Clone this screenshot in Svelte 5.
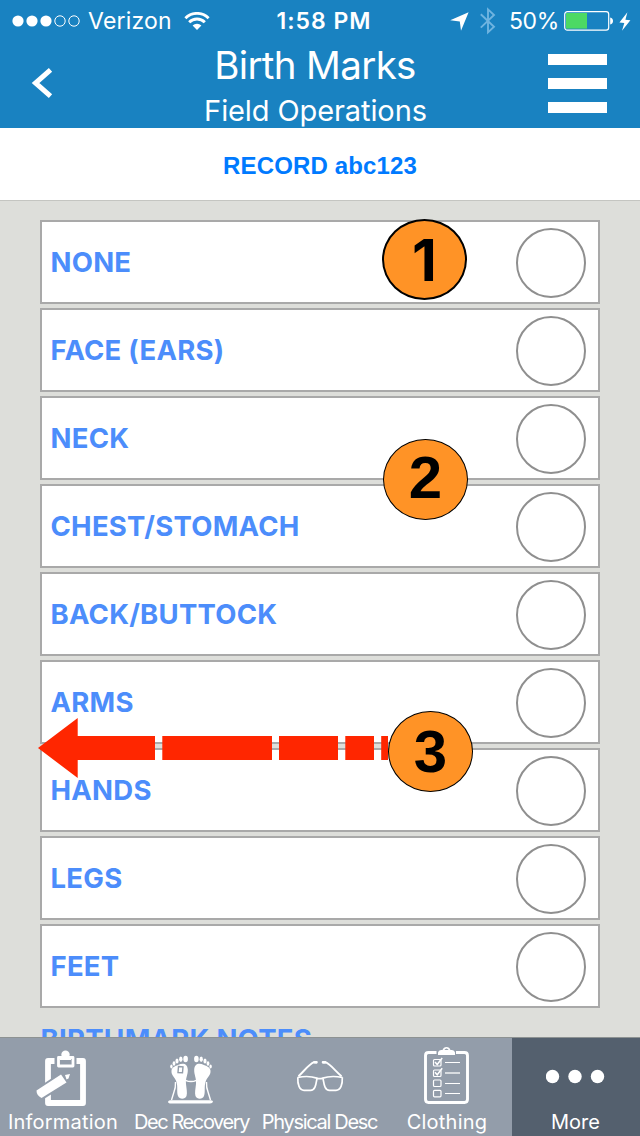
<script>
  const rows = [
    'NONE',
    'FACE (EARS)',
    'NECK',
    'CHEST/STOMACH',
    'BACK/BUTTOCK',
    'ARMS',
    'HANDS',
    'LEGS',
    'FEET'
  ];
  const markers = [
    { n: 1, x: 382, y: 219 },
    { n: 2, x: 383, y: 439 },
    { n: 3, x: 388, y: 711 }
  ];
</script>

<div class="screen">
  <header>
    <div class="status">
      <div class="side left">
        <svg class="dots" width="68" height="14" viewBox="0 0 68 14">
          <g fill="#fff"><circle cx="6" cy="7" r="5.6" /><circle cx="20" cy="7" r="5.6" /><circle cx="34" cy="7" r="5.6" /></g>
          <g fill="none" stroke="#fff"><circle cx="48" cy="7" r="5.2" /><circle cx="62" cy="7" r="5.2" /></g>
        </svg>
        <span class="carrier">Verizon</span>
        <svg class="wifi" width="26" height="18" viewBox="0 0 26 18" fill="none" stroke="#fff" stroke-width="2.9">
          <path d="M1.400 6.200a16.400 16.400 0 0 1 23.200 0" />
          <path d="M5.200 10.200a11 11 0 0 1 15.600 0" />
          <path d="M13 18l-4.400-4.400a6.200 6.200 0 0 1 8.800 0z" fill="#fff" stroke="none" />
        </svg>
      </div>
      <div class="clock">1:58 PM</div>
      <div class="side right">
        <svg class="location" width="19" height="19" viewBox="0 0 19 19"><path d="M18.600.2L11 18.800 9.800 9.400.2 8.200z" fill="#fff" /></svg>
        <svg class="bluetooth" width="16" height="28" viewBox="0 0 16 28" fill="none" stroke="#6fb4e0" stroke-width="1.9"><path d="M.8 7.200l13.200 12.600L8 25.400V2.400l6 5.600L.8 20.600" /></svg>
        <span class="percent">50%</span>
        <svg class="battery" width="50" height="20" viewBox="0 0 50 20">
          <rect x=".7" y=".7" width="44" height="18.4" rx="2.6" fill="none" stroke="#fff" stroke-width="1.2" />
          <rect x="2" y="2" width="21" height="15.6" fill="#4cd964" />
          <path d="M46.200 6.600q2.800.6 2.800 3.400t-2.800 3.400z" fill="#fff" />
        </svg>
        <svg class="bolt" width="12" height="19" viewBox="0 0 12 19"><path d="M8.400.2L.4 10.400l4.900.5L3 18.800l8.400-10.500-5-.5z" fill="#fff" /></svg>
      </div>
    </div>
    <nav>
      <button class="back" aria-label="Back">
        <svg width="22" height="32" viewBox="0 0 22 32"><path d="M19.500 2.800L4.500 16l15 13.200" fill="none" stroke="#fff" stroke-width="5" /></svg>
      </button>
      <div class="titles">
        <h1>Birth Marks</h1>
        <h2>Field Operations</h2>
      </div>
      <button class="menu" aria-label="Menu"><i></i><i></i><i></i></button>
    </nav>
  </header>

  <div class="record">RECORD abc123</div>

  <main>
    {#each rows as label}
      <div class="row"><span>{label}</span><i class="radio"></i></div>
    {/each}
    <div class="notes">BIRTHMARK NOTES</div>
  </main>

  <footer>
    <div class="tab">
      <svg width="56" height="62" viewBox="36 1046 56 62">
        <path d="M54.500 1061H48v42h35v-42h-6.500" fill="none" stroke="#fff" stroke-width="5.800" stroke-linejoin="round" />
        <path d="M58.500 1057.500h14.500v8.500h-14.500z" fill="none" stroke="#fff" stroke-width="2.800" stroke-linejoin="round" />
        <circle cx="65.500" cy="1054.700" r="4.200" fill="#fff" /><path d="M60 1056h11v4H60z" fill="#fff" />
        <path d="M41.500 1098q-4.500-3-4.500-7.500l24-16 5.500 8z" fill="#fff" stroke="#939daa" stroke-width="4" />
        <path d="M41.500 1098q-5-2.500-5-7.500l24.500-16 5.500 8z" fill="#fff" />
        <path d="M65 1075l5-1-1.500 4.500-2 1z" fill="#fff" />
      </svg>
      <span class="t0">Information</span>
    </div>
    <div class="tab">
      <svg width="56" height="62" viewBox="164 1046 56 62">
        <path d="M170 1100.300h41q2 0 2 1.500-.5 1.800-3 1.800h-39q-3 0-3-1.800.5-1.500 2-1.500z" fill="#fff" />
        <path d="M175.500 1082q.3 6-1.700 10.500l-2.300 7.500M206.500 1082q-.3 6 1.700 10.500l2.300 7.500M185.500 1080.300q5.500 2.500 11 0" fill="none" stroke="#fff" stroke-width="1.400" />
        <g fill="#fff">
          <path d="M178 1065c5-2.500 9.500-1.500 9.800 4.500.2 5.500-2.300 8-1.800 14.500.5 5 1.500 9 .5 12-1.500 3.500-7 3.500-8.500 0-1.500-3.500 0-9-1.500-14s-5.500-6.500-5-11.500c.3-3 3.500-4.500 6.500-5.500z" />
          <path d="M204 1065c-5-2.500-9.500-1.500-9.800 4.500-.2 5.500 2.300 8 1.800 14.500-.5 5-1.500 9-.5 12 1.500 3.500 7 3.500 8.500 0 1.500-3.500 0-9 1.500-14s5.500-6.500 5-11.500c-.3-3-3.500-4.500-6.500-5.500z" />
          <ellipse cx="185.600" cy="1059" rx="2.300" ry="3.300" /><ellipse cx="180.800" cy="1059.300" rx="1.700" ry="2.800" /><ellipse cx="177" cy="1061" rx="1.600" ry="2.500" /><ellipse cx="174" cy="1063.500" rx="1.400" ry="2.200" /><ellipse cx="171.400" cy="1066.500" rx="1.200" ry="2" />
          <ellipse cx="196.400" cy="1059" rx="2.300" ry="3.300" /><ellipse cx="201.200" cy="1059.300" rx="1.700" ry="2.800" /><ellipse cx="205" cy="1061" rx="1.600" ry="2.500" /><ellipse cx="208" cy="1063.500" rx="1.400" ry="2.200" /><ellipse cx="210.600" cy="1066.500" rx="1.200" ry="2" />
        </g>
        <path d="M178.500 1066.500l4.500.3-.5 6-4.500-.3z" fill="none" stroke="#939daa" stroke-width="1.400" />
      </svg>
      <span class="t1">Dec Recovery</span>
    </div>
    <div class="tab">
      <svg width="56" height="62" viewBox="292 1046 56 62" fill="none" stroke="#fff">
        <path d="M317 1062.500l-3-.3c-5 2-10 9-15.500 14M322.500 1062.500l3-.3c5 2 10 9 16 14" stroke-width="1.900" />
        <path d="M297.800 1077.300c6-1 14-1 19 .8q3 1.200 6 0c5-1.800 13.500-1.800 19.500-.8M297.800 1077.300c-.3 7 1.500 13 6.200 13h6.500c5 0 5.500-6.500 6.500-12M342.300 1077.300c.3 7-1.500 13-6.300 13h-6.500c-5 0-5.500-6.500-6.500-12" stroke-width="1.700" />
        <path d="M314.500 1062.300h2M323 1062.300h2" stroke-width="2.600" stroke-linecap="round" />
      </svg>
      <span class="t2">Physical Desc</span>
    </div>
    <div class="tab">
      <svg width="56" height="62" viewBox="420 1046 56 62" fill="none" stroke="#fff">
        <path d="M436.500 1052.500h-8q-3 0-3 3v43.800q0 3.200 3 3.200h36q3 0 3-3.200v-43.800q0-3-3-3H456" stroke-width="2.900" />
        <path d="M438 1055v-2.500q.5-2.300 3-2.500h1.500q1-3 4-3t4 3h1.500q2.500.2 3 2.500v2.500z" fill="#fff" stroke="none" />
        <path d="M444.300 1050q2.200-3 4.400 0z" fill="#939daa" stroke="none" />
        <g stroke-width="1.200"><rect x="433.500" y="1059.500" width="7.500" height="6.500" rx="1" /><rect x="433.500" y="1070" width="7.500" height="6.500" rx="1" /><rect x="433.500" y="1080" width="7.500" height="6.500" rx="1" /><rect x="433.500" y="1090.300" width="7.500" height="6.500" rx="1" /></g>
        <path d="M435 1062l2.200 2.500 5-6.500M435 1072.200l2.200 2.500 5-6.500" stroke-width="1.500" />
        <path d="M445 1062.500h15M445 1083.500h15M445 1093.500h15" /><path d="M445 1073h15" stroke-width="1.600" stroke-opacity=".8" />
      </svg>
      <span class="t3">Clothing</span>
    </div>
    <div class="tab active">
      <svg width="60" height="62" viewBox="546 1046 60 62" fill="#fff"><circle cx="552.500" cy="1076.500" r="6.700" /><circle cx="575" cy="1076.500" r="6.700" /><circle cx="597.500" cy="1076.500" r="6.700" /></svg>
      <span class="t4">More</span>
    </div>
  </footer>

  <svg class="arrow" width="350" height="60" viewBox="38 718 350 60" fill="#ff2600">
    <path d="M38 748l39.700-30v18H155v24H77.700v18z" />
    <path d="M162.300 736H272v24H162.300zM279 736h59v24h-59zM345.300 736H374v24h-28.700zM381.200 736H388v24h-6.800z" />
  </svg>
  {#each markers as m}
    <div class="marker m{m.n}" style="left:{m.x}px;top:{m.y}px">{m.n}</div>
  {/each}
</div>

<style>
  :global(body) { margin: 0; }
  .screen {
    position: relative;
    display: flex;
    flex-direction: column;
    width: 640px;
    height: 1136px;
    overflow: hidden;
    background: #dddeda;
    font-family: Inter, "Liberation Sans", sans-serif;
  }
  header { flex: none; height: 128px; background: #1982c1; color: #fff; }
  .status { display: grid; grid-template-columns: 250px 1fr 250px; height: 40px; align-items: center; font-size: 23px; line-height: 42px; }
  .side { display: flex; align-items: center; }
  .left { padding-left: 12px; }
  .carrier { margin-left: 8px; width: 85px; letter-spacing: .2px; white-space: nowrap; font-weight: 400; }
  .wifi { margin-left: 11px; }
  .clock { text-align: center; font-weight: 600; padding-left: 8px; letter-spacing: 1px; white-space: nowrap; }
  .right { justify-content: flex-end; padding-right: 9px; font-weight: 400; }
  .bluetooth { margin: 0 13px 0 11px; }
  .percent { width: 49px; white-space: nowrap; letter-spacing: -.4px; }
  .battery { margin: 0 5px 0 6px; }
  nav { display: grid; grid-template-columns: 120px 1fr 120px; height: 88px; }
  button { border: 0; background: none; padding: 0; }
  .back { display: flex; padding: 27px 0 0 31px; }
  .titles { text-align: center; white-space: nowrap; padding-right: 10px; }
  h1, h2 { margin: 0; font-weight: 400; }
  h1 { font-size: 38.500px; line-height: 51px; letter-spacing: -.65px; }
  h2 { font-size: 29px; line-height: 39px; letter-spacing: -.1px; padding-left: 1px; }
  .menu { display: flex; flex-direction: column; gap: 13px; padding: 14px 0 0 28px; }
  .menu i { width: 59px; height: 11px; background: #fff; }
  .record {
    flex: none; box-sizing: border-box; height: 73px; border-bottom: 1px solid #c4c5c1; background: #fff;
    color: #007aff; text-align: center; font: bold 24px/75px "Liberation Sans", sans-serif; letter-spacing: .14px;
  }
  main { flex: 1; min-height: 0; overflow: hidden; display: flex; flex-direction: column; gap: 4px; padding: 19px 40px 0; }
  .row {
    flex: none; box-sizing: border-box; height: 84px; border: 2px solid #a9a9a9; background: #fff;
    display: flex; align-items: center; justify-content: space-between; padding: 1px 12px 0 8.500px;
  }
  .row span, .notes { color: #4c8dfb; font-size: 27.500px; font-weight: 700; letter-spacing: .25px; white-space: nowrap; }
  .row span { padding-bottom: 2px; }
  .radio { box-sizing: border-box; width: 70px; height: 70px; margin-top: 1px; border: 2px solid #8f8f8f; border-radius: 50%; }
  .notes { line-height: 34px; margin-top: 10px; padding-left: .5px; }
  footer { flex: none; box-sizing: border-box; height: 99px; display: grid; grid-template-columns: repeat(5, 128px); background: #939daa; border-top: 1px solid #8d9292; color: #fff; }
  .tab { display: flex; flex-direction: column; align-items: center; padding-top: 8px; font-size: 20px; line-height: 28px; white-space: nowrap; }
  .tab svg { flex: none; }
  .t0 { letter-spacing: .2px; margin-left: -2px; }
  .t1 { letter-spacing: -1.400px; margin-left: -1px; }
  .t2 { letter-spacing: -1.300px; margin-left: -1px; }
  .t3 { letter-spacing: .25px; margin-left: -2px; }
  .t4 { margin-left: -1px; }
  .active { background: #54606e; }
  .arrow { position: absolute; left: 38px; top: 718px; }
  .marker {
    position: absolute; box-sizing: border-box; width: 85px; height: 81px; border: 1.500px solid #000; border-radius: 50%;
    background: #ff9326; text-align: center; font: bold 60px/80px "Liberation Sans", sans-serif;
  }
  .m1 { border-width: 2px; font: 700 57.500px/79px Inter, sans-serif; }
  .m2 { line-height: 76px; }
</style>
